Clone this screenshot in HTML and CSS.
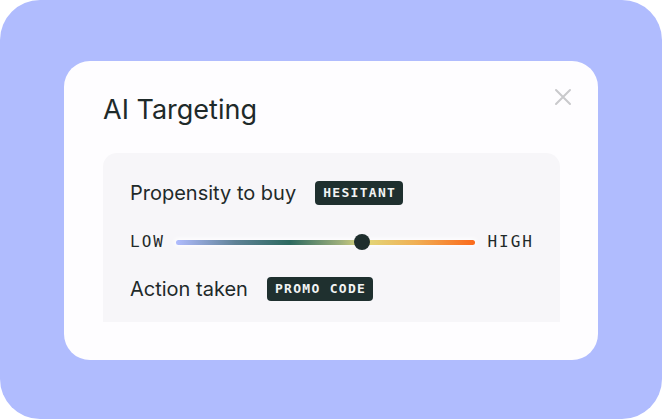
FILE: index.html
```html
<!DOCTYPE html>
<html>
<head>
<meta charset="utf-8">
<link rel="stylesheet" href="styles.css">
</head>
<body>
<div class="frame">
  <div class="card">
    <div class="card-head">
      <h1 class="title">AI Targeting</h1>
      <svg class="close" width="18" height="18" viewBox="0 0 18 18"><path d="M2 2 L16 16 M16 2 L2 16" stroke="#c9c9cc" stroke-width="2" stroke-linecap="round"/></svg>
    </div>
    <div class="panel">
      <div class="row">
        <span class="label">Propensity to buy</span>
        <span class="badge">HESITANT</span>
      </div>
      <div class="scale">
        <span class="mono">LOW</span>
        <div class="track"><span class="knob" style="left: 62.2%"></span></div>
        <span class="mono">HIGH</span>
      </div>
      <div class="row">
        <span class="label">Action taken</span>
        <span class="badge">PROMO CODE</span>
      </div>
    </div>
  </div>
</div>
</body>
</html>
```

FILE: styles.css
```css
html, body { margin: 0; padding: 0; background: #ffffff; }
body { width: 662px; height: 419px; overflow: hidden; font-family: Inter, "Liberation Sans", sans-serif; color: #1f2a2a; }
.frame {
  width: 662px; height: 419px; box-sizing: border-box;
  background: #b0bcfe; border-radius: 40px;
  padding: 61px 64px 59px 64px;
}
.card {
  width: 534px; height: 299px; box-sizing: border-box;
  background: #fefdff; border-radius: 26px;
  padding: 0 38px 0 39px;
  display: flex; flex-direction: column;
}
.card-head { display: flex; justify-content: space-between; align-items: flex-start; height: 92px; }
.title { margin: 33px 0 0 0; font-size: 27px; font-weight: 400; line-height: 32px; letter-spacing: 0; color: #1f2a2a; }
.close { margin-top: 27px; margin-right: -12px; }
.panel {
  background: #f7f6f9; border-radius: 14px 14px 0 0;
  height: 169px; box-sizing: border-box;
  padding: 27px 28px 0 27px;
  display: flex; flex-direction: column;
}
.row { display: flex; align-items: center; height: 26px; gap: 19px; }
.label { font-size: 20px; line-height: 26px; color: #1f2a2a; }
.badge {
  background: #1f302f; color: #f2f4f4; border-radius: 4px;
  font-family: "DejaVu Sans Mono", "Liberation Mono", monospace;
  font-size: 13px; font-weight: 700; letter-spacing: 1.3px;
  padding: 5px 7px 5px 8px; line-height: 14px;
}
.scale { display: flex; align-items: center; height: 18px; margin: 27px 0 25px 0; gap: 11px; }
.mono { font-family: "DejaVu Sans Mono", "Liberation Mono", monospace; font-size: 16px; letter-spacing: 2px; color: #1f2a2a; line-height: 18px; }
.mono:last-child { margin-right: -2px; }
.track {
  position: relative; flex: 1; height: 5px; border-radius: 3px; margin: 0 1px 0 0;
  background: linear-gradient(90deg, #b0bcfe 0%, #5f8296 20%, #2d6a60 38%, #9eb07c 55%, #e2d87a 63%, #f0b055 80%, #fb6a1c 100%);
  box-shadow: 0 0 4px 2px rgba(255,255,255,0.8);
}
.knob {
  position: absolute; top: 50%; width: 16px; height: 16px; margin: -8px 0 0 -8px;
  background: #1f2e2d; border-radius: 50%;
}
```
